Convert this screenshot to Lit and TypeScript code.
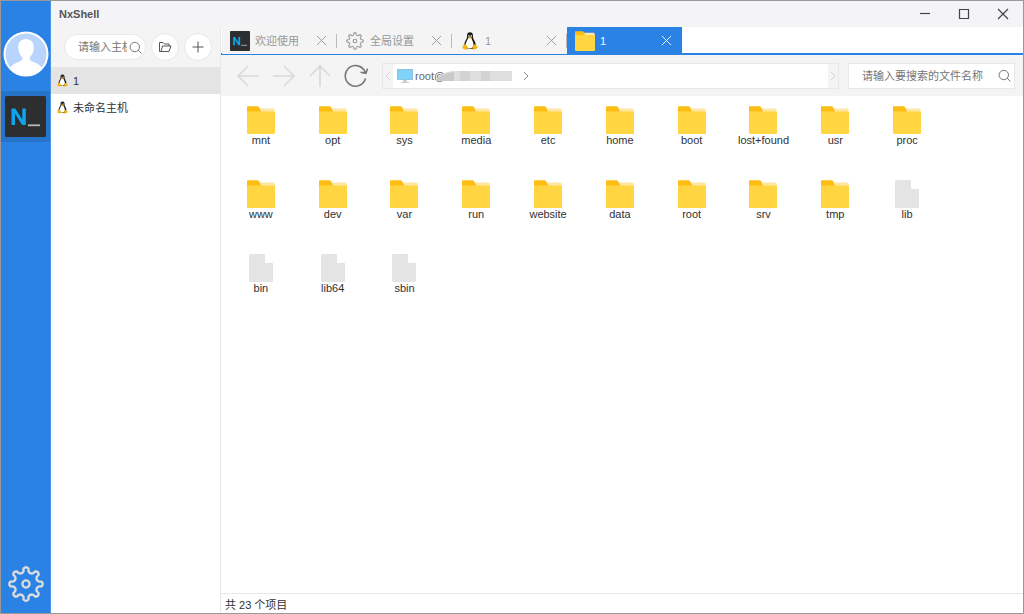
import { LitElement, html, svg, css } from "lit";
import { customElement, state } from "lit/decorators.js";
import { classMap } from "lit/directives/class-map.js";

const shell = (cls: string) => html`<svg class=${cls} viewBox="0 0 41 41" aria-hidden="true">
  <rect width="41" height="41" rx="1.5" fill="#2d2e30" />
  <path d="M6.500 29V12.500H10.200L17.300 23.500V12.500H20.800V29H17.200L10 17.800V29Z" fill="#0ea5ee" />
  <path d="M23 29.300H35" stroke="#b9b9b9" stroke-width="1.800" />
</svg>`;

const penguin = (cls: string) => html`<svg class=${cls} viewBox="0 0 16 18" aria-hidden="true">
  <path d="M8 0.300C5.600 .3 5 2 5.100 4.100 5.200 6.200 4.300 7.200 3.300 9 2.300 10.900 1.900 13.500 2.900 15.200L5.500 17H10.500L13.100 15.200C14.100 13.300 13.600 10.800 12.600 9 11.600 7.200 10.900 6.200 11 4 11 1.800 10.300 .3 8 .3Z" fill="#1b1b1b" />
  <path d="M6.200 6C5.600 8.200 3.700 10 3.700 12.700 3.900 15.200 5.500 16.600 7.600 16.600S11.300 15.200 11.500 12.700C11.600 10.200 9.900 8.300 9.400 6Z" fill="#fff" />
  <ellipse cx="7" cy="3.900" rx=".7" ry=".9" fill="#fff" /><ellipse cx="9.200" cy="3.900" rx=".7" ry=".9" fill="#fff" />
  <path d="M6.100 5.400L8 4.700 10 5.400 8 6.900Z" fill="#f5b50a" />
  <path d="M2.900 12.300C1.800 12.900 .6 13.500 .8 14.500 .8 15.500 .2 16.200 .8 16.600 2.300 17.100 4.100 18 5.300 17.500 6.600 16.800 6.100 15.500 5.200 14.300 4.500 13.100 3.900 12 2.900 12.300ZM12.500 12.600C13.100 12.500 13.800 13.500 15 14.200 15.700 14.600 15.500 15.400 15.700 15.800 14.500 16.400 13.300 17.600 11.900 17.700 10.300 17.700 10.400 15.900 10.700 14.300 10.900 13.200 11.500 12.600 12.500 12.600Z" fill="#f5b50a" />
</svg>`;

const gearPath = (() => {
  const pts: string[] = [];
  const at = (deg: number, r: number) => {
    const a = (deg * Math.PI) / 180;
    return `${(20 + r * Math.sin(a)).toFixed(2)} ${(20 - r * Math.cos(a)).toFixed(2)}`;
  };
  for (let i = 0; i < 8; i++) {
    const d = i * 45;
    pts.push(`${i ? "L" : "M"}${at(d - 11, 14.5)}L${at(d - 9, 17.4)}Q${at(d, 20)} ${at(d + 9, 17.4)}L${at(d + 11, 14.5)}Q${at(d + 22.5, 11.5)} ${at(d + 34, 14.5)}`);
  }
  return pts.join("") + "Z";
})();

const gear = (cls: string, width: number) => html`<svg class=${cls} viewBox="0 0 40 40" aria-hidden="true"
  fill="none" stroke="currentColor" stroke-width=${width} stroke-linejoin="round">
  <path d=${gearPath} /><circle cx="20" cy="20" r="4" />
</svg>`;

const folder = (cls: string) => html`<svg class=${cls} viewBox="0 0 28 28" aria-hidden="true">
  <path d="M8 2.500H26.500Q27.500 2.500 27.500 3.500V10H8Z" fill="#ffe6a3" />
  <path d="M0 1.200Q0 .2 1 .2H10.500Q11.500 .2 12 1.200L14 5.500V9H0Z" fill="#fdbd12" />
  <path d="M0 5.500H28V27Q28 28 27 28H1Q0 28 0 27Z" fill="#ffd541" />
</svg>`;

const file = (cls: string) => html`<svg class=${cls} viewBox="0 0 28 28" aria-hidden="true">
  <path d="M3.500 0H18V7.500Q18 9 19.500 9H26V26.500Q26 28 24.500 28H3.500Q2 28 2 26.500V1.500Q2 0 3.500 0Z" fill="#e4e4e4" />
</svg>`;

const line = (cls: string, box: number, d: string) => html`<svg class=${cls} viewBox="0 0 ${box} ${box}" aria-hidden="true"
  fill="none" stroke="currentColor">${svg`<path d=${d} />`}</svg>`;

const CROSS = "M1 1L11 11M11 1L1 11";
const LENS = "M9.200 9.200L12.500 12.500M10.500 6A4.700 4.700 0 1 1 1.100 6A4.700 4.700 0 1 1 10.500 6";

type Tab = { icon: "shell" | "gear" | "linux" | "folder"; label: string };

@customElement("app-root")
export class AppRoot extends LitElement {
  @state() private host = 0;
  @state() private tab = 3;

  private hosts = ["1", "未命名主机"];
  private tabs: Tab[] = [
    { icon: "shell", label: "欢迎使用" },
    { icon: "gear", label: "全局设置" },
    { icon: "linux", label: "1" },
    { icon: "folder", label: "1" },
  ];
  private folders = "mnt opt sys media etc home boot lost+found usr proc www dev var run website data root srv tmp".split(" ");
  private files = "lib bin lib64 sbin".split(" ");

  static styles = css`
    :host {
      display: block;
      font: 11px/16px "Liberation Sans", "Noto Sans CJK SC", sans-serif;
      color: #303133;
    }
    * { box-sizing: border-box; }
    svg { display: block; flex: none; }
    button { font: inherit; color: inherit; background: none; border: 0; padding: 0; margin: 0; }
    input { font: inherit; color: #555; background: none; border: 0; padding: 0; outline: 0; min-width: 0; flex: 1; }
    input::placeholder { color: #757575; opacity: 1; }
    .window { display: grid; grid-template-columns: 50px 1fr; min-height: 100vh; border: 1px solid #999; background: #fff; }
    .rail { display: flex; flex-direction: column; align-items: stretch; background: #2a82e4; border-right: 1px solid #4a94e8; }
    .avatar { margin: 30px 0 14px 2px; }
    .avatar svg { width: 46px; height: 46px; }
    .module { padding: 5px 4px; background: #2673ca; }
    .module svg { width: 41px; height: 41px; }
    .prefs { margin: auto 0 11px 7px; color: #dcdcdc; }
    .prefs svg { width: 36px; height: 36px; }
    .body { display: grid; grid-template-rows: 26px 1fr; min-width: 0; }
    .title { display: flex; align-items: center; justify-content: space-between; background: #f4f4f7; padding: 0 14px 0 8px; }
    h1 { font-size: 11px; line-height: 16px; margin: 0; color: #555; }
    .controls { display: flex; gap: 27px; color: #444; }
    .controls svg { width: 12px; height: 12px; stroke-width: 1.2; }
    .split { display: grid; grid-template-columns: 170px 1fr; min-height: 0; }
    .side { background: #fff; border-right: 1px solid #e8e8e8; }
    .tools { display: flex; align-items: center; gap: 5px; height: 40px; padding: 0 8px 0 13px; background: #f4f4f4; }
    .find { display: flex; align-items: center; background: #fff; border: 1px solid #e8e8e8; }
    .pill { flex: 1; min-width: 0; height: 26px; border-radius: 13px; padding: 0 3px 0 13px; gap: 2px; }
    .pill input { width: 50px; }
    .lens { width: 13px; height: 13px; color: #777; }
    .round { width: 28px; height: 28px; border-radius: 50%; background: #fff; border: 1px solid #e8e8e8; display: grid; place-items: center; color: #555; }
    .round svg { width: 14px; height: 14px; }
    ul { list-style: none; margin: 0; padding: 0; }
    .host { display: flex; align-items: center; gap: 5px; width: 100%; height: 27px; padding: 0 6px; text-align: left; }
    .host.on { background: #e4e4e4; }
    .tux { width: 11px; height: 13px; }
    .main { display: grid; grid-template-rows: 28px 41px 1fr 20px; min-width: 0; }
    .tabs { display: flex; padding-left: 1px; border-bottom: 2px solid #2a82e4; }
    .tab { display: flex; align-items: center; width: 115px; height: 27px; padding-left: 8px; background: #f4f4f4; color: #999; }
    .tab.on { background: #2a82e4; color: #fff; }
    .pick { display: flex; align-items: center; gap: 5px; flex: 1; text-align: left; }
    .ticon { width: 20px; height: 20px; }
    .ticon.small { height: 18px; }
    .close { height: 14px; padding-right: 9px; border-right: 1px solid #bbb; }
    .on .close { border-color: transparent; }
    .close svg { width: 11px; height: 11px; }
    .bar { display: flex; align-items: center; gap: 9px; padding: 0 8px 0 15px; background: #f4f4f4; }
    .nav { display: flex; align-items: center; gap: 12px; margin-right: 5px; color: #d9d9d9; }
    .nav svg { width: 24px; height: 24px; stroke-width: 1.6; }
    .nav .reload { color: #777; }
    .address { display: flex; align-items: center; flex: 1; min-width: 0; height: 26px; background: #fff; border: 1px solid #e8e8e8; color: #666; }
    .cap { width: 10px; height: 24px; background: #f4f4f4; color: #d4d4d4; display: grid; place-items: center; }
    .chev { width: 10px; height: 10px; }
    .crumbs .chev { color: #888; }
    .pc { width: 16px; height: 14px; margin: 0 2px 0 4px; }
    .mask { width: 76px; height: 11px; margin: 0 9px 0 -9px; z-index: 1; }
    .crumbs { display: flex; align-items: center; flex: 1; }
    .search { width: 167px; height: 26px; padding: 0 3px 0 13px; }
    .grid { display: grid; grid-template-columns: repeat(auto-fill, minmax(70px, 1fr)); grid-auto-rows: 74px; align-content: start; padding: 10px 80px 0 4px; }
    .item { display: flex; flex-direction: column; align-items: center; color: #303133; text-decoration: none; white-space: nowrap; }
    .big { width: 28px; height: 28px; }
    .item span { line-height: 12px; }
    .status { border-top: 1px solid #e8e8e8; padding: 3px 4px 0; }
  `;

  private tabIcon(kind: Tab["icon"]) {
    if (kind === "shell") return shell("ticon");
    if (kind === "gear") return gear("ticon small", 2.4);
    if (kind === "linux") return penguin("ticon small");
    return folder("ticon");
  }

  render() {
    return html`<div class="window">
      <nav class="rail">
        <button class="avatar" aria-label="Account"><svg viewBox="0 0 46 46">
          <circle cx="23" cy="23" r="21.500" fill="#b9d4fd" stroke="#fff" stroke-width="2" />
          <path d="M23 8C17.500 8 15 12 15.300 17 15.500 21.500 17.500 25 19.500 26.500 19.500 29 18.500 30 15.500 31 12 32.200 8.500 34 7.500 37.200A21 21 0 0 0 38.500 37.200C37.500 34 34 32.200 30.500 31 27.500 30 26.500 29 26.500 26.500 28.500 25 30.500 21.500 30.700 17 31 12 28.500 8 23 8Z" fill="#fff" />
        </svg></button>
        <button class="module" aria-label="Shell">${shell("")}</button>
        <button class="prefs" aria-label="Settings">${gear("", 2.6)}</button>
      </nav>
      <div class="body">
        <header class="title">
          <h1>NxShell</h1>
          <div class="controls">
            <button aria-label="Minimize">${line("", 12, "M1 5.500H11")}</button>
            <button aria-label="Maximize">${line("", 12, "M1.500 1.500H10.500V10.500H1.500Z")}</button>
            <button aria-label="Close">${line("", 12, CROSS)}</button>
          </div>
        </header>
        <div class="split">
          <aside class="side">
            <div class="tools">
              <label class="find pill"><input aria-label="主机" placeholder="请输入主机名称" />${line("lens", 13, LENS)}</label>
              <button class="round" aria-label="Open">${line("", 14, "M3 11.500H1.500V2.500H5L6.500 4H11V6M3 11.500H11L13 6H4.500L3 11.500")}</button>
              <button class="round" aria-label="Add">${line("", 14, "M7 1.500V12.500M1.500 7H12.500")}</button>
            </div>
            <ul>${this.hosts.map((h, i) => html`<li><button class=${classMap({ host: true, on: i === this.host })}
              @click=${() => (this.host = i)}>${penguin("tux")}<span>${h}</span></button></li>`)}</ul>
          </aside>
          <main class="main">
            <div class="tabs">${this.tabs.map((t, i) => html`<div class=${classMap({ tab: true, on: i === this.tab })}>
              <button class="pick" @click=${() => (this.tab = i)}>${this.tabIcon(t.icon)}<span>${t.label}</span></button>
              <button class="close" aria-label="Close tab">${line("", 12, CROSS)}</button>
            </div>`)}</div>
            <div class="bar">
              <div class="nav">
                <button aria-label="Back">${line("", 24, "M23 12H2M12 2L2 12L12 22")}</button>
                <button aria-label="Forward">${line("", 24, "M1 12H22M12 2L22 12L12 22")}</button>
                <button aria-label="Up">${line("", 24, "M12 23V2M2 12L12 2L22 12")}</button>
                <button class="reload" aria-label="Reload"><svg viewBox="0 0 24 24" fill="none" stroke="currentColor">
                  <path d="M21.500 14.500A10.300 10.300 0 1 1 20 6L21.700 9M23.600 4.500L21.900 9.300L16.500 8.200" /></svg></button>
              </div>
              <div class="address">
                <button class="cap" aria-label="Scroll left">${line("chev", 10, "M7 1L3 5L7 9")}</button>
                <div class="crumbs">
                  <svg class="pc" viewBox="0 0 16 14"><rect x=".5" y=".5" width="15" height="10" fill="#7fd3fb" stroke="#8cc4de" /><path d="M6 11H10V13H6Z" fill="#ccc" /><path d="M4 13.500H12" stroke="#ccc" /></svg>
                  <span>root@</span>
                  <svg class="mask" viewBox="0 0 76 11" preserveAspectRatio="none"><path d="M0 11Q2 3 16 1H76V11Z" fill="#dedede" /><path d="M0 11Q3 4 18 2V11Z" fill="#c9c9c9" /><path d="M24 1H34V11H24ZM45 1H54V11H45Z" fill="#d3d3d3" /></svg>
                  ${line("chev", 10, "M3 1L7 5L3 9")}
                </div>
                <button class="cap" aria-label="Scroll right">${line("chev", 10, "M3 1L7 5L3 9")}</button>
              </div>
              <label class="find search"><input aria-label="搜索" placeholder="请输入要搜索的文件名称" />${line("lens", 13, LENS)}</label>
            </div>
            <div class="grid">
              ${this.folders.map((n) => html`<a class="item" href="#${n}">${folder("big")}<span>${n}</span></a>`)}
              ${this.files.map((n) => html`<a class="item" href="#${n}">${file("big")}<span>${n}</span></a>`)}
            </div>
            <footer class="status">共 23 个项目</footer>
          </main>
        </div>
      </div>
    </div>`;
  }
}
